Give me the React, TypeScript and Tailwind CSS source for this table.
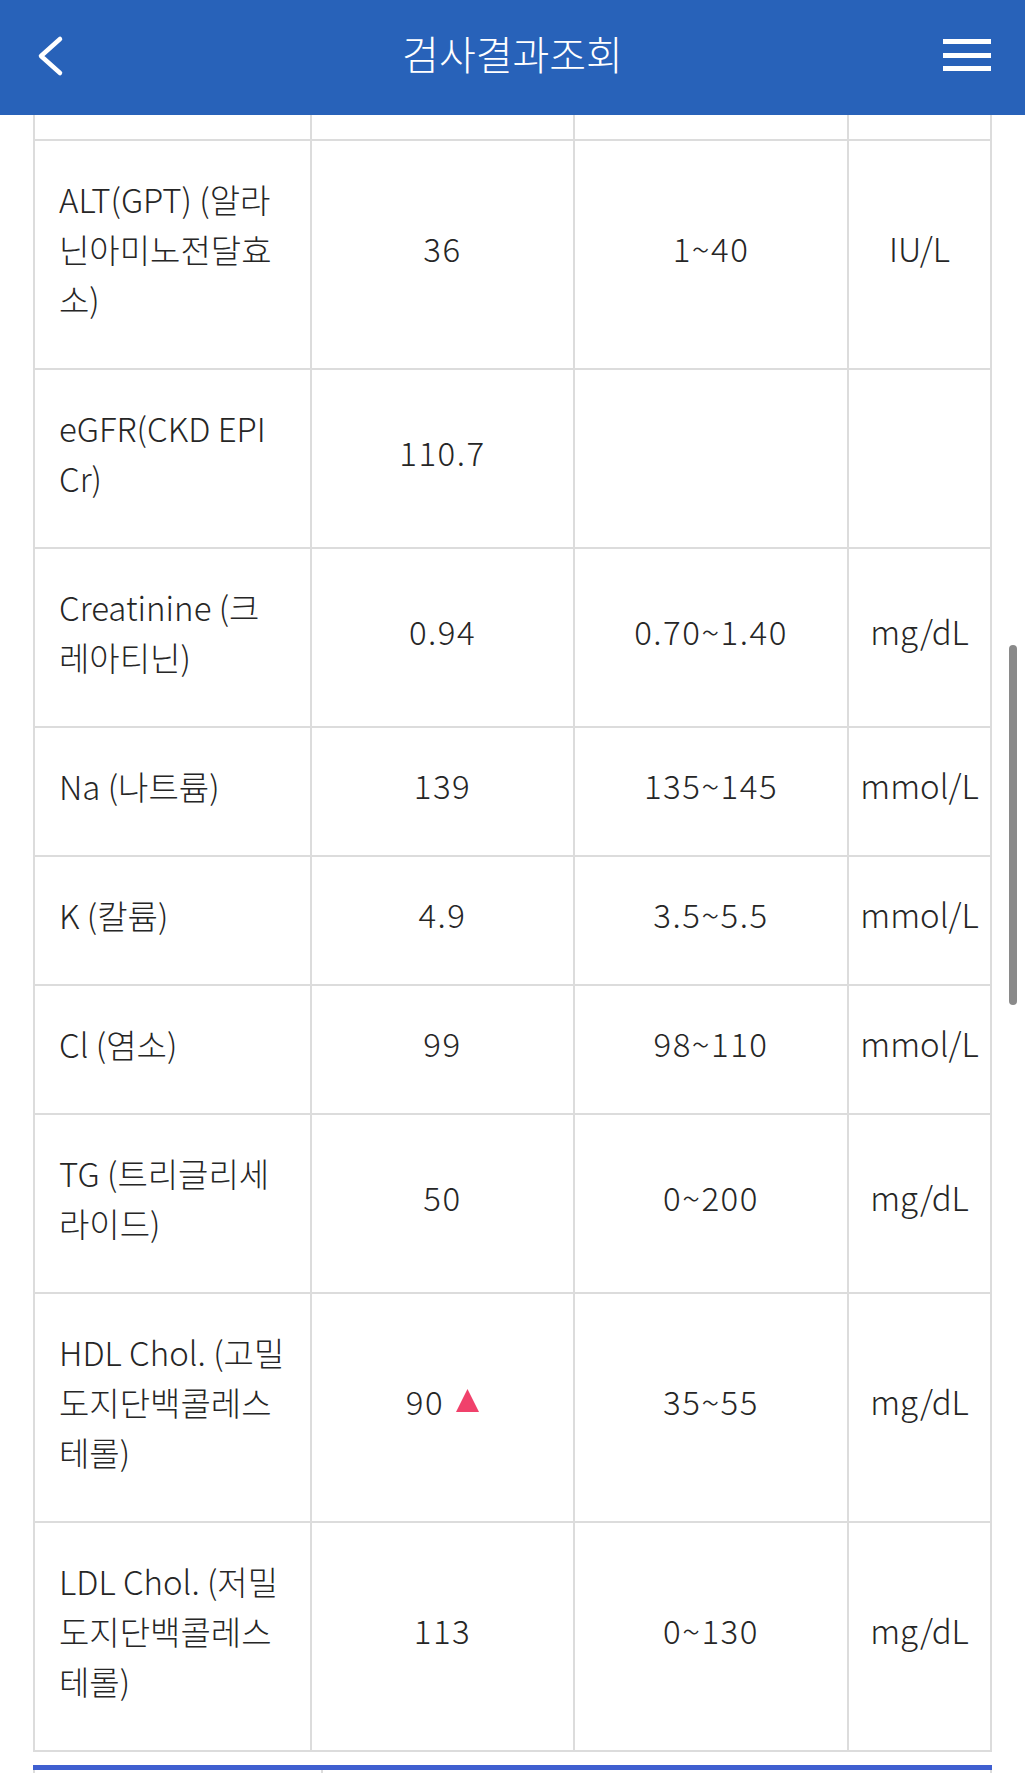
import React from 'react'

type Row = {
  name: string[]
  value: string
  high?: boolean
  range: string
  unit: string
}

const rows: Row[] = [
  { name: ['ALT(GPT) (알라', '닌아미노전달효', '소)'], value: '36', range: '1~40', unit: 'IU/L' },
  { name: ['eGFR(CKD EPI', 'Cr)'], value: '110.7', range: '', unit: '' },
  { name: ['Creatinine (크', '레아티닌)'], value: '0.94', range: '0.70~1.40', unit: 'mg/dL' },
  { name: ['Na (나트륨)'], value: '139', range: '135~145', unit: 'mmol/L' },
  { name: ['K (칼륨)'], value: '4.9', range: '3.5~5.5', unit: 'mmol/L' },
  { name: ['Cl (염소)'], value: '99', range: '98~110', unit: 'mmol/L' },
  { name: ['TG (트리글리세', '라이드)'], value: '50', range: '0~200', unit: 'mg/dL' },
  { name: ['HDL Chol. (고밀', '도지단백콜레스', '테롤)'], value: '90', high: true, range: '35~55', unit: 'mg/dL' },
  { name: ['LDL Chol. (저밀', '도지단백콜레스', '테롤)'], value: '113', range: '0~130', unit: 'mg/dL' },
]

const rowGrid = 'grid grid-cols-[277px_263px_274px_141px] border-b-2 border-[#dcdcdc]'

export default function App() {
  return (
    <div
      className="relative w-[1025px] h-[1773px] overflow-hidden bg-white text-[#262626] font-light"
      style={{ fontFamily: '"Noto Sans CJK KR", "Noto Sans", sans-serif' }}
    >
      <header className="grid grid-cols-[1fr_auto_1fr] items-center h-[115px] bg-[#2862b9] px-[34px] pb-[4px]">
        <button type="button" className="justify-self-start">
          <svg width="30" height="44" viewBox="0 0 30 44">
            <path d="M26 5 L7 22 L26 39" fill="none" stroke="#fff" strokeWidth="4.5" strokeLinecap="round" strokeLinejoin="round" />
          </svg>
        </button>
        <h1 className="mt-[-6px] text-[40px] leading-none text-white font-light">검사결과조회</h1>
        <button type="button" className="justify-self-end">
          <svg width="48" height="33" viewBox="0 0 48 33">
            <rect x="0" y="0" width="48" height="5" fill="#fff" />
            <rect x="0" y="14" width="48" height="5" fill="#fff" />
            <rect x="0" y="27" width="48" height="5" fill="#fff" />
          </svg>
        </button>
      </header>

      <div className="ml-[33px] w-[959px] border-x-2 border-[#dcdcdc]">
        <div className={rowGrid}>
          <div className="h-[24px] border-r-2 border-[#dcdcdc]" />
          <div className="border-r-2 border-[#dcdcdc]" />
          <div className="border-r-2 border-[#dcdcdc]" />
          <div />
        </div>
        {rows.map((item, index) => (
          <div key={index} className={rowGrid}>
            <div className="border-r-2 border-[#dcdcdc] pt-[32.5px] pb-[44.5px] pl-[24px] text-[33px] leading-[50px]">
              {item.name.map((line, i) => (
                <div key={i} className="whitespace-nowrap">
                  {line}
                </div>
              ))}
            </div>
            <div className="flex items-center justify-center gap-[12px] border-r-2 border-[#dcdcdc] pb-[12px] text-[33px] tracking-[1.5px]">
              <span>{item.value}</span>
              {item.high && (
                <svg width="23" height="23" viewBox="0 0 23 23" className="mt-[-2px]">
                  <path d="M11.5 0 L23 23 L0 23 Z" fill="#f0416b" />
                </svg>
              )}
            </div>
            <div className="flex items-center justify-center border-r-2 border-[#dcdcdc] pb-[12px] text-[33px] tracking-[1.5px]">
              {item.range}
            </div>
            <div className="flex items-center justify-center whitespace-nowrap pb-[12px] text-[33px]">
              {item.unit}
            </div>
          </div>
        ))}
      </div>

      <div className="mt-[13px] ml-[33px] w-[959px] border-t-[5px] border-[#3f5fd0]">
        <div className="grid grid-cols-[288px_1fr] h-[40px] border-x-2 border-[#dcdcdc]">
          <div className="border-r-2 border-[#dcdcdc]" />
          <div />
        </div>
      </div>

      <div className="absolute right-[8px] top-[645px] h-[360px] w-[8px] rounded-full bg-[#8a8a8a]" />
    </div>
  )
}
